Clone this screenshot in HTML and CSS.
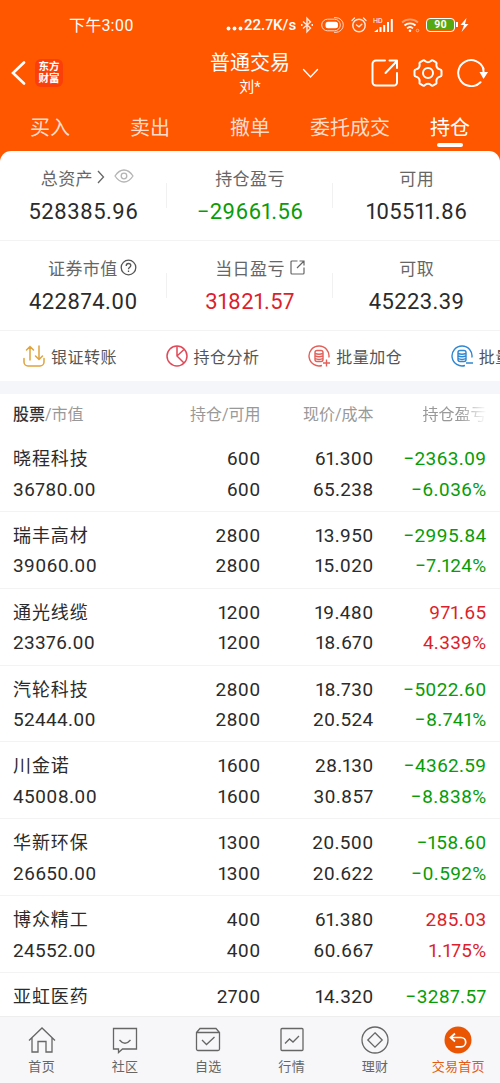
FILE: index.html
```html
<!DOCTYPE html>
<html lang="zh-CN">
<head>
  <meta charset="UTF-8" />
  <meta name="viewport" content="width=device-width, initial-scale=1.0"/>
  <title>普通交易</title>
  <link rel="stylesheet" href="styles.css">
</head>
<body>

<div class="app">

  <div class="top">
    <div class="status">
      <span class="time">下午3:00</span>
      <div class="status-right">
        <svg class="dots" width="17" height="14" viewBox="0 0 17 14"><g fill="#fff"><circle cx="2.5" cy="10.5" r="1.9"/><circle cx="8.5" cy="10.5" r="1.9"/><circle cx="14.5" cy="10.5" r="1.9"/></g></svg>
        <span class="speed">22.7K/s</span>
        <svg class="bt" width="14" height="18" viewBox="0 0 14 18" fill="none" stroke="#ffe9de" stroke-width="1.4"><path d="M3 5.5l7.5 6.5L7 15.8V2.2L10.5 6 3 12.5"/><path d="M1 9h1.500M11.500 9h1.500" stroke-width="2"/></svg>
        <svg class="pill" width="23" height="16" viewBox="0 0 23 16" fill="none" stroke="#ffd9c8"><rect x="4.500" y="4.800" width="12.500" height="6.400" rx="2.500" fill="#fff" stroke="none"/><rect x=".7" y="2.200" width="18.600" height="11.600" rx="5.800"/><path d="M13 .7h2a7.300 7.300 0 0 1 0 14.600h-2"/></svg>
        <svg class="alarm" width="16" height="16" viewBox="0 0 16 16" fill="none" stroke="#ffe9de" stroke-width="1.4" stroke-linecap="round"><circle cx="8" cy="8.5" r="6.2"/><path d="M1 3.500L3.500 1M15 3.500L12.500 1M5.500 8L8 9.800l2.800-2.500"/></svg>
        <svg class="signal" width="21" height="18" viewBox="0 0 21 18"><text x="0" y="6.8" class="hd">HD</text><g fill="#fff"><path d="M1 16l4-3v3z"/><rect x="6.5" y="11" width="2" height="5"/><rect x="10.2" y="9" width="2" height="7"/><rect x="14" y="6" width="2" height="10"/><rect x="17.8" y="3" width="2" height="13"/></g></svg>
        <svg class="wifi" width="19" height="16" viewBox="0 0 19 16" fill="none" stroke="#fff" stroke-width="1.8"><path d="M1 5.500a12 12 0 0 1 16 0" stroke="#ff9d6e"/><path d="M3.500 8.500a8 8 0 0 1 11 0M6 11.300a4.500 4.500 0 0 1 6 0"/><circle cx="9" cy="13.8" r="1.3" fill="#fff" stroke="none"/><circle cx="16.5" cy="13.5" r="1.3" stroke="#ffb899" stroke-width="1"/></svg>
        <span class="battery"><i>90</i></span>
        <svg class="bolt" width="9" height="14" viewBox="0 0 9 14"><path d="M6.500 0L.5 7H4L1.500 14 8.500 6H5z" fill="#fff"/></svg>
      </div>
    </div>

    <div class="header">
      <svg class="back" width="15" height="24" viewBox="0 0 15 24" fill="none" stroke="#fff" stroke-width="2.6" stroke-linecap="round"><path d="M13 1.500L2 12l11 10.500"/></svg>
      <div class="logo"><span>东方</span><span>财富</span></div>
      <div class="account">
        <div class="account-type">普通交易</div>
        <div class="account-name">刘*</div>
      </div>
      <svg class="arrow" width="17" height="11" viewBox="0 0 17 11" fill="none" stroke="#fff" stroke-width="1.4" stroke-linecap="round"><path d="M1.500 1.500l7 7.500 7-7.500"/></svg>
      <div class="tools">
        <svg width="28" height="28" viewBox="0 0 28 28" fill="none" stroke="#fff" stroke-width="2" stroke-linecap="round" stroke-linejoin="round"><path d="M14 1.500H5a3.500 3.500 0 0 0-3.500 3.500v18A3.500 3.500 0 0 0 5 26.500h18a3 3 0 0 0 3-3V14"/><path d="M14.500 14L26 2M18.500 1.500H26V9"/></svg>
        <svg width="30" height="28" viewBox="0 0 30 28" fill="none" stroke="#fff" stroke-width="2" stroke-linejoin="round"><path d="M10.200 1.400Q11.200.8 12 2q3 2.400 6 0 .8-1.200 1.800-.6l3 1.700q1 .6.700 1.700-.8 4.400 3.600 5.600 1.400.3 1.400 1.300v4.600q0 1-1.400 1.300-4.400 1.200-3.600 5.600.3 1.100-.7 1.700l-3 1.700q-1 .6-1.800-.6-3-2.400-6 0-.8 1.200-1.800.6l-3-1.700q-1-.6-.7-1.700.8-4.400-3.600-5.600-1.400-.3-1.400-1.300v-4.600q0-1 1.400-1.300 4.400-1.200 3.600-5.600-.3-1.100.7-1.700z"/><circle cx="15" cy="14" r="5"/></svg>
        <svg width="31" height="28" viewBox="0 0 31 28" fill="none" stroke="#fff" stroke-width="2"><path d="M26.500 10A13 13 0 1 0 23.500 23.200" stroke-linecap="round"/><path d="M22.500 13h8.500l-4.500 7z" fill="#fff" stroke="none"/><path d="M26 8l.7 6"/></svg>
      </div>
    </div>

    <div class="tabs">
      <div class="tab">买入</div>
      <div class="tab">卖出</div>
      <div class="tab">撤单</div>
      <div class="tab">委托成交</div>
      <div class="tab active">持仓</div>
    </div>
  </div>

  <div class="assets">
    <div class="asset-row">
      <div class="asset">
        <div class="label">总资产<svg class="more" width="8" height="14" viewBox="0 0 8 14" fill="none" stroke="#666" stroke-width="1.3"><path d="M1 1l5.500 6L1 13"/></svg><svg class="eye" width="20" height="14" viewBox="0 0 20 14" fill="none" stroke="#b5b5b5" stroke-width="1.3"><path d="M1 7q4-6 9-6t9 6q-4 6-9 6T1 7z"/><circle cx="10" cy="7" r="2.8"/></svg></div>
        <div class="value">528385.96</div>
      </div>
      <div class="asset">
        <div class="label">持仓盈亏</div>
        <div class="value down">−29661.56</div>
      </div>
      <div class="asset">
        <div class="label">可用</div>
        <div class="value">105511.86</div>
      </div>
    </div>
    <div class="asset-row">
      <div class="asset">
        <div class="label">证券市值<svg class="help" width="17" height="17" viewBox="0 0 17 17" fill="none" stroke="#555" stroke-width="1.3"><circle cx="8.5" cy="8.5" r="7.3"/><path d="M6.200 7q0-2.500 2.300-2.500T10.800 6.600q0 1-1.200 1.800T8.500 10.300M8.500 11.500v1.400"/></svg></div>
        <div class="value">422874.00</div>
      </div>
      <div class="asset">
        <div class="label">当日盈亏<svg class="share" width="15" height="15" viewBox="0 0 15 15" fill="none" stroke="#666" stroke-width="1.2"><path d="M7.500 1H2a1 1 0 0 0-1 1v11a1 1 0 0 0 1 1h11a1 1 0 0 0 1-1V7.500M7 8l7-7M9.500 1H14v4.500"/></svg></div>
        <div class="value up">31821.57</div>
      </div>
      <div class="asset">
        <div class="label">可取</div>
        <div class="value">45223.39</div>
      </div>
    </div>
  </div>

  <div class="actions">
    <div class="action">
      <svg width="22" height="22" viewBox="0 0 22 22" fill="none" stroke="#e0a33c" stroke-width="1.5" stroke-linecap="round"><path d="M1 13.500v3.500a4 4 0 0 0 4 4h12a4 4 0 0 0 4-4v-3.500M7 15V1.500M3.500 5L7 1.500 10.500 5M16 1v13.500M12.500 11L16 14.500 19.500 11"/></svg>
      <span>银证转账</span>
    </div>
    <div class="action">
      <svg width="22" height="22" viewBox="0 0 22 22" fill="none" stroke="#e04a58" stroke-width="1.5"><circle cx="11" cy="11" r="10"/><path d="M11 1v10l7 7M11 11l7-6.500"/></svg>
      <span>持仓分析</span>
    </div>
    <div class="action">
      <svg width="22" height="22" viewBox="0 0 22 22" fill="none" stroke="#e3605a" stroke-width="1.4"><path d="M14 20.500A10 10 0 1 1 20.900 12.500"/><rect x="7" y="5.5" width="8" height="11" rx="2"/><path d="M7 8.500q4 1.500 8 0M7 11q4 1.500 8 0M7 13.700q4 1.500 8 0M18.500 14.500v7M15 18h7"/></svg>
      <span>批量加仓</span>
    </div>
    <div class="action">
      <svg width="22" height="22" viewBox="0 0 22 22" fill="none" stroke="#2f86d1" stroke-width="1.4"><path d="M14 20.500A10 10 0 1 1 20.900 12.500"/><rect x="7" y="5.5" width="8" height="11" rx="2"/><path d="M7 8.500q4 1.500 8 0M7 11q4 1.500 8 0M7 13.700q4 1.500 8 0M15 18h7"/></svg>
      <span>批量减仓</span>
    </div>
  </div>

  <div class="holdings">
    <div class="row head">
      <div><b>股票</b>/市值</div>
      <div>持仓/可用</div>
      <div>现价/成本</div>
      <div class="fade">持仓盈亏</div>
    </div>
    <div class="row">
      <div><span class="name">晓程科技</span><span>36780.00</span></div>
      <div><span>600</span><span>600</span></div>
      <div><span>61.300</span><span>65.238</span></div>
      <div class="down"><span>−2363.09</span><span>−6.036%</span></div>
    </div>
    <div class="row">
      <div><span class="name">瑞丰高材</span><span>39060.00</span></div>
      <div><span>2800</span><span>2800</span></div>
      <div><span>13.950</span><span>15.020</span></div>
      <div class="down"><span>−2995.84</span><span>−7.124%</span></div>
    </div>
    <div class="row">
      <div><span class="name">通光线缆</span><span>23376.00</span></div>
      <div><span>1200</span><span>1200</span></div>
      <div><span>19.480</span><span>18.670</span></div>
      <div class="up"><span>971.65</span><span>4.339%</span></div>
    </div>
    <div class="row">
      <div><span class="name">汽轮科技</span><span>52444.00</span></div>
      <div><span>2800</span><span>2800</span></div>
      <div><span>18.730</span><span>20.524</span></div>
      <div class="down"><span>−5022.60</span><span>−8.741%</span></div>
    </div>
    <div class="row">
      <div><span class="name">川金诺</span><span>45008.00</span></div>
      <div><span>1600</span><span>1600</span></div>
      <div><span>28.130</span><span>30.857</span></div>
      <div class="down"><span>−4362.59</span><span>−8.838%</span></div>
    </div>
    <div class="row">
      <div><span class="name">华新环保</span><span>26650.00</span></div>
      <div><span>1300</span><span>1300</span></div>
      <div><span>20.500</span><span>20.622</span></div>
      <div class="down"><span>−158.60</span><span>−0.592%</span></div>
    </div>
    <div class="row">
      <div><span class="name">博众精工</span><span>24552.00</span></div>
      <div><span>400</span><span>400</span></div>
      <div><span>61.380</span><span>60.667</span></div>
      <div class="up"><span>285.03</span><span>1.175%</span></div>
    </div>
    <div class="row">
      <div><span class="name">亚虹医药</span></div>
      <div><span>2700</span></div>
      <div><span>14.320</span></div>
      <div class="down"><span>−3287.57</span></div>
    </div>
  </div>

  <div class="nav">
    <div class="nav-item">
      <svg width="28" height="28" viewBox="0 0 28 28"><path d="M1 14.500L14 2l13 12.500M4 12v14h6V15.500h8V26h6V12"/></svg>
      <span>首页</span>
    </div>
    <div class="nav-item">
      <svg width="28" height="28" viewBox="0 0 28 28"><path d="M2.500 2.500h23v20.500H11.500L7.500 26.500V23h-5zM8.500 14q5.500 6.500 11 0"/></svg>
      <span>社区</span>
    </div>
    <div class="nav-item">
      <svg width="28" height="28" viewBox="0 0 28 28"><path d="M2.500 6.500L6 2.500h16l3.500 4V23a1.500 1.500 0 0 1-1.500 1.500H4A1.500 1.500 0 0 1 2.500 23zM2.500 6.500h23M8 14l4.500 4.500L20.500 11"/></svg>
      <span>自选</span>
    </div>
    <div class="nav-item">
      <svg width="28" height="28" viewBox="0 0 28 28"><rect x="3" y="2.5" width="22" height="22" rx="1"/><path d="M7 17.500l4.500-4.500 3.500 3 6-6"/></svg>
      <span>行情</span>
    </div>
    <div class="nav-item">
      <svg width="28" height="28" viewBox="0 0 28 28"><circle cx="14" cy="14" r="13"/><path d="M14 6.800l7.200 7.200-7.200 7.200L6.800 14z"/></svg>
      <span>理财</span>
    </div>
    <div class="nav-item active">
      <svg width="28" height="28" viewBox="0 0 28 28"><circle cx="14" cy="14" r="13.5" class="disc"/><path d="M11 7.500L6.500 11.500l4.500 4M6.500 11.500H17a4.700 4.700 0 0 1 0 9.400h-5.500" class="turn"/></svg>
      <span>交易首页</span>
    </div>
  </div>

</div>

</body>
</html>
```
FILE: styles.css
```css
* {
  box-sizing: border-box;
}
body {
  margin: 0;
  font-family: Roboto, "Noto Sans CJK SC", sans-serif;
  font-variant-numeric: proportional-nums;
  background: #fff;
  color: #2b2b2b;
}
svg {
  display: block;
  flex: none;
}
.app {
  height: 1083px;
  display: flex;
  flex-direction: column;
  overflow: hidden;
}
.top {
  flex: none;
  height: 166px;
  background: #ff5600;
  color: #fff;
}

/* status bar */
.status {
  height: 50px;
  padding: 0 31px 0 69px;
  display: flex;
  justify-content: space-between;
  align-items: center;
}
.time {
  margin-top: -2px;
  font-size: 16px;
  letter-spacing: 0.2px;
}
.status-right {
  display: flex;
  align-items: center;
}
.speed {
  width: 55px;
  margin-left: 1px;
  font-size: 15px;
  font-weight: 500;
  white-space: nowrap;
}
.bt {
  margin-left: 1px;
}
.pill {
  margin-left: 7px;
}
.alarm {
  margin-left: 7px;
}
.signal {
  margin-left: 6px;
}
.hd {
  font-size: 7px;
  fill: #fff;
}
.wifi {
  margin-left: 7px;
}
.battery {
  width: 29px;
  height: 14px;
  margin: 0 3px 0 6px;
  padding: 1px;
  border: 1.5px solid #fff;
  border-radius: 4px;
  display: flex;
  position: relative;
}
.battery::after {
  content: "";
  position: absolute;
  right: -4px;
  top: 3px;
  width: 2px;
  height: 5px;
  background: #fff;
}
.battery i {
  flex: 1;
  background: #55a80f;
  border-radius: 1px;
  font-style: normal;
  font-size: 10.5px;
  font-weight: bold;
  line-height: 10px;
  text-align: center;
}
.bolt {
  margin-left: 2px;
}

/* header */
.header {
  height: 55px;
  padding: 0 12px 0 11px;
  display: flex;
  align-items: center;
}
.back {
  margin-top: -9px;
}
.logo {
  width: 28px;
  height: 28px;
  margin: -9px 0 0 9px;
  border-radius: 6px;
  background: #fb3f0a;
  display: flex;
  flex-direction: column;
  justify-content: center;
  font-size: 10.5px;
  font-weight: bold;
  line-height: 12px;
  text-align: center;
}
.account {
  width: 84px;
  margin: -8px 0 0 145px;
  text-align: center;
  white-space: nowrap;
}
.account-type {
  font-size: 20px;
  line-height: 26px;
}
.account-name {
  font-size: 15px;
  line-height: 22px;
}
.arrow {
  margin: -9px 0 0 10px;
}
.tools {
  margin: -9px 0 0 auto;
  display: flex;
  gap: 14px;
}

.tabs {
  height: 45px;
  display: flex;
}
.tab {
  flex: 1;
  font-size: 20px;
  line-height: 47px;
  text-align: center;
  color: #ffdccb;
}
.tab.active {
  color: #fff;
}
.tab.active::after {
  content: "";
  display: block;
  width: 26px;
  height: 4px;
  margin: -9px auto 0;
  border-radius: 2px;
  background: #fff;
}

/* assets */
.assets {
  flex: none;
  margin-top: -15px;
  background: #fff;
  border-radius: 11px 11px 0 0;
}
.asset-row {
  height: 90px;
  display: flex;
  border-bottom: 1px solid #f3f3f3;
}
.asset {
  flex: 1;
  padding-top: 14px;
  text-align: center;
  background: linear-gradient(#f1f1f1, #f1f1f1) right 32px / 1px 25px no-repeat;
}
.asset:last-child {
  background: none;
}
.label {
  height: 24px;
  display: flex;
  justify-content: center;
  align-items: center;
  font-size: 17px;
  letter-spacing: 0.4px;
  color: #666;
}
.more {
  margin-left: 4px;
}
.eye {
  margin: -2px -8px 0 9px;
}
.help {
  margin: 0 -18px 0 2px;
}
.share {
  margin: 0 -20px 0 5px;
}
.value {
  margin-top: 9px;
  font-size: 22px;
  line-height: 28px;
  letter-spacing: 0.4px;
}
.down {
  color: #089c08;
}
.up {
  color: #dc1f2c;
}

/* actions */
.actions {
  flex: none;
  height: 50px;
  padding-left: 23px;
  display: flex;
  align-items: center;
  overflow: hidden;
}
.action {
  flex: none;
  width: 142.6px;
  display: flex;
  align-items: center;
  gap: 6px;
  font-size: 16px;
  letter-spacing: 0.5px;
  color: #555;
}
.action span {
  margin-top: -1px;
}

/* holdings */
.holdings {
  flex: 1;
  min-height: 0;
  border-top: 13px solid #f5f6f9;
  overflow: hidden;
}
.row {
  height: 76.85px;
  padding: 8px 13.5px 0 13px;
  display: grid;
  grid-template-columns: 1fr 100px 113px 113px;
  text-align: right;
  font-size: 19px;
  line-height: 31px;
  letter-spacing: 0.3px;
  border-bottom: 1px solid #f3f3f3;
}
.row span {
  display: block;
  height: 30.5px;
}
.row > div:first-child {
  text-align: left;
}
.row .name {
  font-size: 18px;
  letter-spacing: 0.9px;
}
.row.head {
  height: 41px;
  padding-top: 5px;
  border-bottom: none;
  font-size: 16px;
  letter-spacing: 0;
  color: #999;
}
.head b {
  font-weight: 500;
  color: #333;
}
.head .fade {
  -webkit-mask-image: linear-gradient(to left, transparent 0, #000 28px);
  mask-image: linear-gradient(to left, transparent 0, #000 28px);
}

/* bottom nav */
.nav {
  flex: none;
  height: 67px;
  padding-top: 9px;
  display: flex;
  background: #f7f7fa;
  border-top: 1px solid #eee;
}
.nav-item {
  flex: 1;
  display: flex;
  flex-direction: column;
  align-items: center;
  font-size: 13px;
  line-height: 20px;
  letter-spacing: 0.3px;
  color: #666;
  white-space: nowrap;
}
.nav-item svg {
  margin-bottom: 3px;
  fill: none;
  stroke: #666;
  stroke-width: 1.3;
}
.nav-item.active {
  color: #e55a12;
}
.nav-item .disc {
  fill: #ea5504;
  stroke: none;
}
.nav-item .turn {
  stroke: #fff;
  stroke-width: 1.7;
}
```
